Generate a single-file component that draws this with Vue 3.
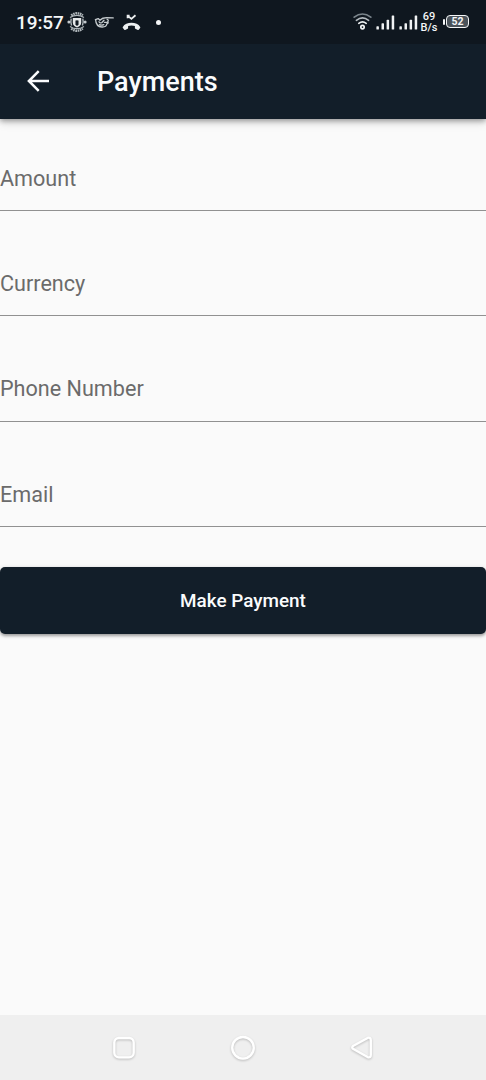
<script setup>
const fields = ['Amount', 'Currency', 'Phone Number', 'Email']
const bars = [0, 1, 2, 3]
</script>

<template>
  <div class="screen">
    <header class="top">
      <div class="status">
        <span class="clock">19:57</span>
        <svg class="crest" width="20" height="20" viewBox="0 0 20 20" fill="none" stroke="#aeb6ba">
          <path d="M4.2 3.4Q10-1 15.8 3.4M4.2 16.6Q10 21 15.8 16.6" stroke-width="2.4" stroke-dasharray="1.7 .6" />
          <path d="M3 5.6Q10 1.2 17 5.6M3 14.4Q10 19 17 14.4" stroke-width="1.2" />
          <circle cx="1.9" cy="10" r="1.5" fill="#c3c9cd" stroke="none" />
          <circle cx="18.1" cy="10" r="1.5" fill="#c3c9cd" stroke="none" />
          <path d="M4.2 6.6Q3.2 10 4.6 13.5M15.8 6.6Q16.8 10 15.4 13.5" stroke-width="1.4" />
          <path d="M5.8 6h8.4v4.8c0 2.7-2.1 4-4.2 4.7-2.1-.7-4.2-2-4.2-4.7z" fill="#e5e8e9" stroke="none" />
          <path d="M8.8 8.7h2.4v4.1L10 13.6l-1.2-.8z" fill="#111a22" stroke="#111a22" stroke-width=".6" />
        </svg>
        <svg class="hand" width="21" height="14" viewBox="0 0 21 14" fill="none" stroke="#c4cacd" stroke-linecap="round" stroke-linejoin="round">
          <path d="M1.4 4.6L4.2 3.6 6 5.2 9 3.2l3.6-.6L19.2 2.9" stroke-width="1.4" />
          <path d="M1.6 4.6C1.8 8.8 4 11.8 8 12c3 .1 4.6-1.2 4.8-3M12.8 9c1.6-.5 1.7-1.6.9-2.3M13.7 6.7c1-.8.7-2-.6-2.3M5 6.8q1 1.9 3 .7l2-2.2M5.6 9.6q2 .9 4.2 0M10.4 7.3h3" stroke-width="1.3" />
        </svg>
        <svg class="missed" width="19" height="17" viewBox="0 0 19 17">
          <path d="M5.6 4.2V1.6H7.6M5.6 1.6l3.8 3.3 4.1-3.6" fill="none" stroke="#edf0f1" stroke-width="1.8" />
          <path d="M.8 13C3.8 7.4 15.2 7.4 18.2 13q.3.6-.1 1l-1.4 1.7q-.4.4-.9.2l-2.4-1.2q-.5-.3-.5-.8v-1.8q-3.4-1-6.8 0v1.8q0 .5-.5.8l-2.4 1.2q-.5.2-.9-.2L.9 14q-.4-.4-.1-1z" fill="#edf0f1" />
        </svg>
        <i class="dot"></i>
        <div class="indicators">
          <svg class="wifi" width="19" height="19" viewBox="0 0 19 19" fill="none" stroke-linecap="round">
            <path d="M1.2 5.2Q9.5-1.2 17.8 5.2" stroke="#7a848b" stroke-width="1.7" />
            <path d="M3.4 8.3Q9.5 3.6 15.6 8.3" stroke="#b3babf" stroke-width="1.7" />
            <path d="M5.8 11.3Q9.5 8.4 13.2 11.3" stroke="#eef1f2" stroke-width="1.7" />
            <circle cx="9.5" cy="15.1" r="1.7" stroke="#f1f3f4" stroke-width="1.7" />
          </svg>
          <svg v-for="s in 2" :key="s" class="signal" width="19" height="15" viewBox="0 0 19 15" fill="#f0f2f3">
            <rect v-for="b in bars" :key="b" :x="b * 5.1 + .4" :y="[11.3, 8.3, 4.8, 0.5][b]" width="2.5" :height="[3.2, 6.2, 9.7, 14][b]" rx=".6" />
          </svg>
          <div class="rate"><span>69</span><span>B/s</span></div>
          <div class="battery"><i></i><b>52</b></div>
        </div>
      </div>
      <div class="bar">
        <svg class="back" width="22" height="22" viewBox="0 0 22 22" fill="none" stroke="#fafcfd" stroke-width="2.5">
          <path d="M22 11H2M11.7 1.2L1.9 11l9.8 9.8" />
        </svg>
        <h1>Payments</h1>
      </div>
    </header>

    <main>
      <div v-for="f in fields" :key="f" class="field"><label>{{ f }}</label></div>
      <button type="button">Make Payment</button>
    </main>

    <nav>
      <svg width="30" height="30" viewBox="0 0 30 30"><rect x="5.3" y="5" width="19.4" height="19.4" rx="4.6" /></svg>
      <svg width="30" height="30" viewBox="0 0 30 30"><circle cx="15" cy="14.8" r="10.8" /></svg>
      <svg width="30" height="30" viewBox="0 0 30 30"><path d="M20.6 4.9L6.4 12.7q-2.4 1.7 0 3.4l14.2 8q3.2 1 3.2-2.2V7.1q0-3.2-3.2-2.2z" /></svg>
    </nav>
  </div>
</template>

<style>
body { margin: 0; background: #fafafa; }
</style>

<style scoped>
.screen { height: 1080px; display: flex; flex-direction: column; overflow: hidden; background: #fafafa; font-family: Roboto, sans-serif; }
.top { flex: none; height: 119px; background: #121e29; box-shadow: 0 2px 5px rgba(0, 0, 0, .32), 0 4px 9px rgba(0, 0, 0, .12); }
.status { height: 44px; display: flex; align-items: center; box-sizing: border-box; padding-left: 16px; background: #0f171f; color: #f4f6f7; }
.clock { width: 51px; font-size: 19px; line-height: 45px; letter-spacing: -.1px; font-weight: 500; white-space: nowrap; }
.hand { margin-left: 7px; }
.missed { margin-left: 7px; }
.dot { width: 5px; height: 5px; margin-left: 15px; border-radius: 50%; background: #f4f6f7; }
.indicators { margin-left: auto; padding-right: 17px; display: flex; align-items: center; }
.wifi { margin: -1px 4px 0 0; }
.signal { margin-right: 4px; }
.rate { width: 18px; margin-left: -2px; display: flex; flex-direction: column; align-items: center; font-size: 11px; line-height: 11px; font-weight: 500; }
.battery { display: flex; align-items: center; margin: -1px 0 0 5px; }
.battery i { width: 2px; height: 6px; margin-right: 1px; border-radius: 1px; background: #f4f6f7; }
.battery b { width: 23px; height: 13px; box-sizing: border-box; border: 1.5px solid #f4f6f7; border-radius: 4px; background: #4b535a; text-align: center; font-size: 10.5px; line-height: 11px; font-weight: 700; }
.bar { height: 74px; display: flex; align-items: center; padding-left: 27px; }
h1 { margin: 1px 0 0 48px; color: #fafcfd; font-size: 27px; line-height: 32px; font-weight: 500; }
main { flex: 1; padding-top: 27px; }
.field { height: 105.2px; display: flex; flex-direction: column; }
label { height: 64.2px; border-bottom: 1px solid #919191; font-size: 21.6px; line-height: 65px; color: #6b6b6b; }
button { display: block; width: 100%; height: 67px; margin-top: .2px; padding: 0; border: 0; border-radius: 5px; background: #121e29; color: #fafcfd; font: 500 18.9px/67px Roboto, sans-serif; box-shadow: 0 2px 3px rgba(0, 0, 0, .3), 0 1px 5px rgba(0, 0, 0, .14); }
nav { flex: none; height: 65px; box-sizing: border-box; padding: 0 109px 0 109px; display: flex; justify-content: space-between; align-items: center; background: #efefef; }
nav svg { fill: none; stroke: #fff; stroke-width: 2.3; stroke-linejoin: round; filter: drop-shadow(0 1px 1px rgba(0, 0, 0, .22)); }
</style>
